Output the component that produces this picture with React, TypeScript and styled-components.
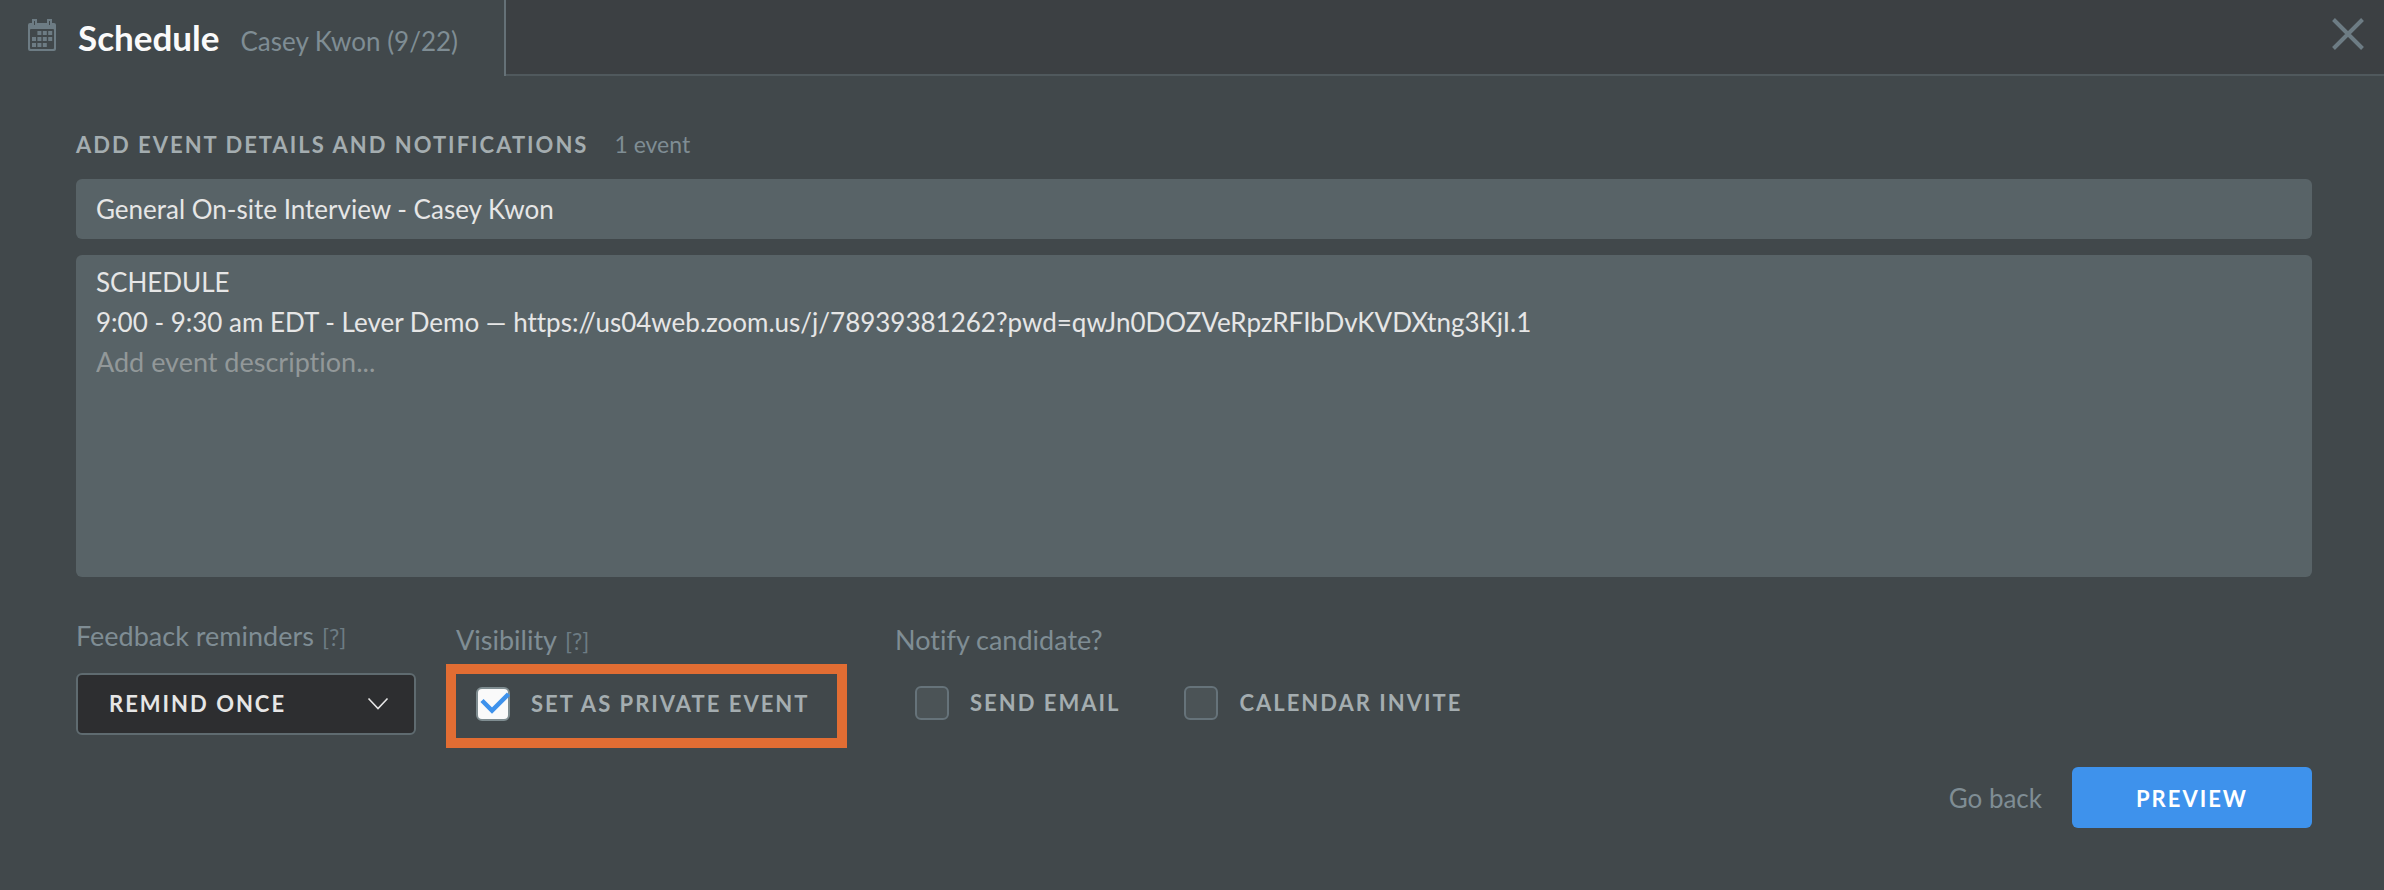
import React from 'react';
import styled, { createGlobalStyle } from 'styled-components';

const c = {
  page: '#41484b',
  bar: '#3c4043',
  line: '#50595d',
  field: '#586367',
  muted: '#7f8d94',
  icon: '#6d7c84',
  caps: '#a4adb0',
  text: '#e6e6e6',
  blue: '#3e92ec',
  orange: '#e26d33',
};

const Global = createGlobalStyle`
  *, *::before, *::after { box-sizing: border-box; }
  body {
    margin: 0;
    background: ${c.page};
    font-family: Lato, "Liberation Sans", sans-serif;
    font-size: 27px;
    line-height: 40px;
    font-variant-ligatures: none;
    color: ${c.text};
  }
  input, textarea, select, button { font: inherit; color: inherit; margin: 0; font-variant-ligatures: none; }
`;

const Header = styled.header`
  display: flex;
  height: 76px;
`;

const Tab = styled.div`
  display: flex;
  align-items: baseline;
  padding: 5px 46px 0 27px;
  border-right: 2px solid #657177;
`;

const TabIcon = styled.svg`
  width: 30px;
  height: 34px;
  align-self: flex-start;
  margin: 13px 21px 0 0;
`;

const Title = styled.h1`
  margin: 0 21px 0 0;
  font-size: 35px;
  line-height: 64px;
  font-weight: 700;
  color: #fafafa;
`;

const Subtitle = styled.span`
  font-size: 26px;
  color: ${c.muted};
`;

const Bar = styled.div`
  flex: 1;
  display: flex;
  justify-content: flex-end;
  align-items: flex-start;
  padding: 14px 16px 0 0;
  background: ${c.bar};
  border-bottom: 2px solid ${c.line};
`;

const CloseButton = styled.button`
  display: flex;
  padding: 0;
  border: 0;
  background: none;
  color: ${c.icon};
  cursor: pointer;
`;

const Form = styled.form`
  padding: 48px 72px 0 76px;
`;

const SectionHead = styled.div`
  display: flex;
  align-items: baseline;
  gap: 26px;
  margin-bottom: 14px;
`;

const SectionTitle = styled.h2`
  margin: 0;
  font-size: 22px;
  line-height: 40px;
  font-weight: 700;
  letter-spacing: 2px;
  text-transform: uppercase;
  color: ${c.caps};
`;

const Count = styled.span`
  font-size: 23px;
  color: ${c.muted};
`;

const TitleInput = styled.input`
  display: block;
  width: 100%;
  height: 60px;
  padding: 0 20px;
  border: 0;
  border-radius: 6px;
  background: ${c.field};
  font-size: 26px;
  outline: none;
`;

const Description = styled.div`
  display: flex;
  flex-direction: column;
  min-height: 322px;
  margin-top: 16px;
  padding: 7px 20px;
  border-radius: 6px;
  background: ${c.field};
`;

const Line = styled.p`
  margin: 0;
  font-size: 26px;
`;

const DescriptionInput = styled.textarea`
  flex: 1;
  padding: 0;
  border: 0;
  background: none;
  outline: none;
  resize: none;
  &::placeholder { color: #929899; opacity: 1; }
`;

const Options = styled.div`
  display: flex;
  align-items: flex-start;
  margin-top: 39px;
`;

const Group = styled.div<{ $width?: number }>`
  ${p => p.$width ? `width: ${p.$width}px;` : ''}
`;

const GroupLabel = styled.div<{ $inset?: number; $top?: number }>`
  display: flex;
  align-items: baseline;
  gap: 8px;
  padding: ${p => p.$top ?? 0}px 0 0 ${p => p.$inset ?? 0}px;
  color: ${c.muted};
`;

const Help = styled.span`
  font-size: 23px;
  color: ${c.icon};
`;

const SelectBox = styled.div`
  display: grid;
  align-items: center;
  width: 340px;
  margin-top: 16px;
  & > * { grid-area: 1 / 1; }
`;

const Select = styled.select`
  appearance: none;
  width: 100%;
  height: 62px;
  padding: 0 60px 0 31px;
  border: 2px solid #5f6b70;
  border-radius: 6px;
  background: #2d2e30;
  font-size: 22px;
  font-weight: 700;
  letter-spacing: 2px;
  text-transform: uppercase;
`;

const Chevron = styled.svg`
  justify-self: end;
  width: 22px;
  height: 14px;
  margin-right: 27px;
  pointer-events: none;
`;

const Highlight = styled.div`
  display: inline-flex;
  height: 84px;
  margin-top: 3px;
  padding: 0 27px 4px 20px;
  border: 10px solid ${c.orange};
`;

const CheckRow = styled.div`
  display: flex;
  gap: 64px;
  height: 84px;
  margin-top: 3px;
  padding: 0 0 4px 20px;
`;

const CheckLabel = styled.label`
  display: flex;
  align-items: center;
  gap: 21px;
  font-size: 22px;
  font-weight: 700;
  letter-spacing: 2px;
  text-transform: uppercase;
  color: ${c.caps};
`;

const CheckBox = styled.span`
  display: grid;
  & > * { grid-area: 1 / 1; }
`;

const CheckInput = styled.input`
  appearance: none;
  width: 34px;
  height: 34px;
  border: 2px solid #66737a;
  border-radius: 6px;
  background: #4b5356;
  &:checked { background: #fafafa; border-color: #7f8d91; }
  & + svg { visibility: hidden; pointer-events: none; }
  &:checked + svg { visibility: visible; }
`;

const Actions = styled.div`
  display: flex;
  justify-content: flex-end;
  align-items: center;
  gap: 30px;
  margin-top: 19px;
  padding-bottom: 61px;
`;

const BackLink = styled.a`
  font-size: 26px;
  color: ${c.muted};
  text-decoration: none;
`;

const PreviewButton = styled.button`
  width: 240px;
  height: 61px;
  padding: 2px 0 0;
  border: 0;
  border-radius: 6px;
  background: ${c.blue};
  color: #fff;
  font-size: 22px;
  font-weight: 700;
  letter-spacing: 2px;
  text-transform: uppercase;
`;

const dots = [[1, 0], [2, 0], [3, 0], [0, 1], [1, 1], [2, 1], [3, 1], [0, 2], [1, 2], [2, 2]];

function CalendarIcon() {
  return (
    <TabIcon viewBox="0 0 30 34" aria-hidden="true">
      <path
        fill={c.icon}
        fillRule="evenodd"
        d="M3 5h2V1h5v4h10V1h5v4h2a2 2 0 0 1 2 2v24a2 2 0 0 1-2 2H3a2 2 0 0 1-2-2V7a2 2 0 0 1 2-2zM4 11q-1 0-1 1v18q0 1 1 1h22q1 0 1-1V12q0-1-1-1zM7 3v4h1V3zM22 3v4h1V3z"
      />
      {dots.map(([x, y]) => (
        <rect key={`${x}-${y}`} x={5 + x * 5.4} y={13 + y * 6} width="4" height="4" fill={c.icon} />
      ))}
    </TabIcon>
  );
}

function Check({ label, checked }: { label: string; checked?: boolean }) {
  return (
    <CheckLabel>
      <CheckBox>
        <CheckInput type="checkbox" defaultChecked={checked} />
        <svg width="34" height="34" viewBox="0 0 34 34" aria-hidden="true">
          <path d="M6 13.5L16 23.5L32.5 7" fill="none" stroke={c.blue} strokeWidth="4.5" />
        </svg>
      </CheckBox>
      {label}
    </CheckLabel>
  );
}

export default function App() {
  return (
    <>
      <Global />
      <Header>
        <Tab>
          <CalendarIcon />
          <Title>Schedule</Title>
          <Subtitle>Casey Kwon (9/22)</Subtitle>
        </Tab>
        <Bar>
          <CloseButton type="button" aria-label="Close">
            <svg width="40" height="40" viewBox="0 0 40 40" aria-hidden="true">
              <path d="M5.500 5.500L34.500 34.500M34.500 5.500L5.500 34.500" stroke="currentColor" strokeWidth="4" />
            </svg>
          </CloseButton>
        </Bar>
      </Header>
      <Form>
        <SectionHead>
          <SectionTitle>Add event details and notifications</SectionTitle>
          <Count>1 event</Count>
        </SectionHead>
        <TitleInput aria-label="Event title" defaultValue="General On-site Interview - Casey Kwon" />
        <Description>
          <Line>SCHEDULE</Line>
          <Line>9:00 - 9:30 am EDT - Lever Demo — https://us04web.zoom.us/j/78939381262?pwd=qwJn0DOZVeRpzRFIbDvKVDXtng3KjI.1</Line>
          <DescriptionInput aria-label="Event description" placeholder="Add event description..." />
        </Description>
        <Options>
          <Group $width={370}>
            <GroupLabel>
              <label htmlFor="reminders">Feedback reminders</label>
              <Help>[?]</Help>
            </GroupLabel>
            <SelectBox>
              <Select id="reminders">
                <option>Remind once</option>
              </Select>
              <Chevron viewBox="0 0 22 14" aria-hidden="true">
                <path d="M1.500 1.500L11 11.500L20.500 1.500" fill="none" stroke={c.text} strokeWidth="1.600" />
              </Chevron>
            </SelectBox>
          </Group>
          <Group $width={449}>
            <GroupLabel $inset={10} $top={4}>
              Visibility
              <Help>[?]</Help>
            </GroupLabel>
            <Highlight>
              <Check label="Set as private event" checked />
            </Highlight>
          </Group>
          <Group>
            <GroupLabel $top={4}>Notify candidate?</GroupLabel>
            <CheckRow>
              <Check label="Send email" />
              <Check label="Calendar invite" />
            </CheckRow>
          </Group>
        </Options>
        <Actions>
          <BackLink href="#back">Go back</BackLink>
          <PreviewButton type="button">Preview</PreviewButton>
        </Actions>
      </Form>
    </>
  );
}
